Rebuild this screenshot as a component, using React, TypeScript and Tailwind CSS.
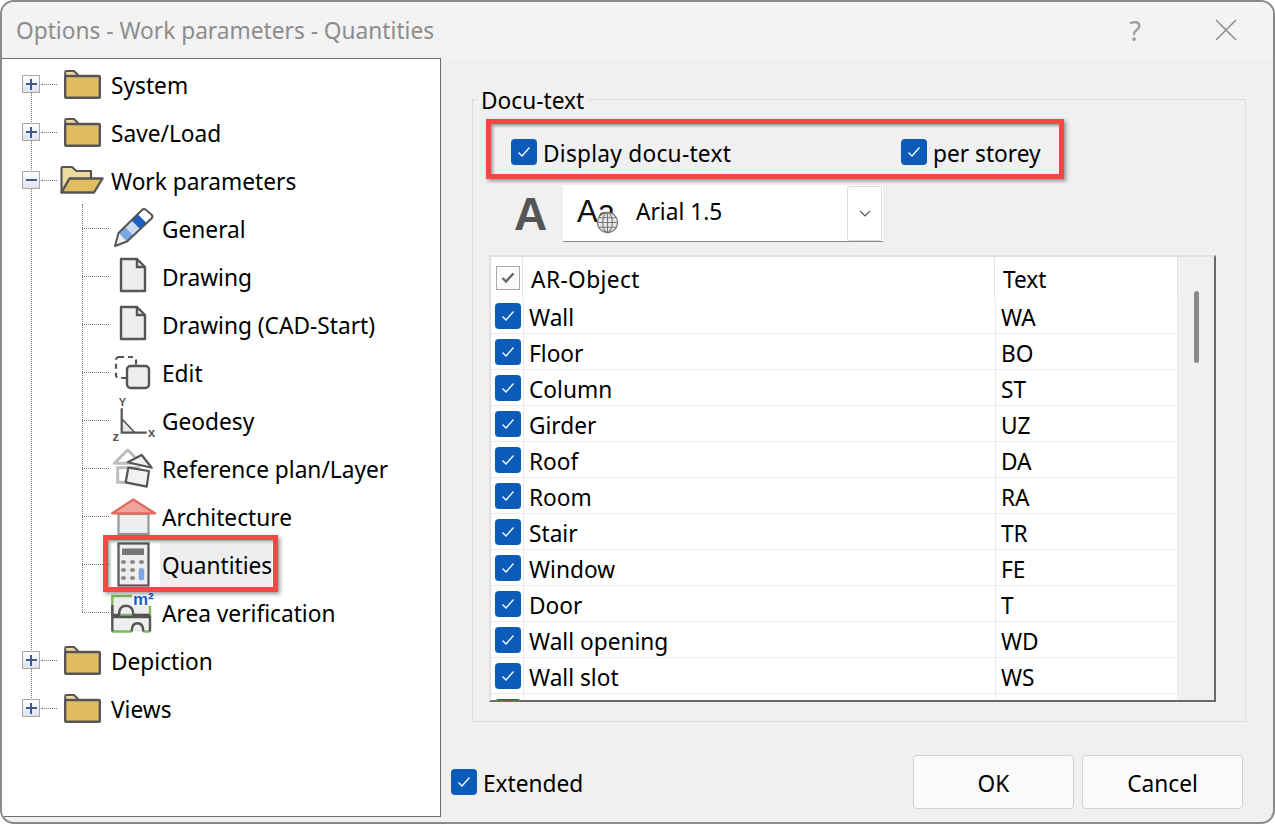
import React from "react";

const Check = () => (
  <span className="flex h-[26px] w-[26px] shrink-0 items-center justify-center rounded-[4px] bg-[#0a5cb8]">
    <svg width="14" height="12" viewBox="0 0 14 12" fill="none" stroke="#fff" strokeWidth="1.3">
      <path d="M1.5 6.5 L5 10 L12.5 1.5" />
    </svg>
  </span>
);

const Folder = () => (
  <svg width="48" height="48" viewBox="0 0 48 48" className="shrink-0">
    <path d="M7.2 15 V10 Q7.2 9 8.5 9 H16 L20 13 V15 Z" fill="#eedb9f" stroke="#555" strokeWidth="2" strokeLinejoin="round" />
    <rect x="7.2" y="14" width="34.6" height="21.8" rx="0.8" fill="#e0bd60" stroke="#555" strokeWidth="2.4" />
  </svg>
);

const OpenFolder = () => (
  <svg width="48" height="48" viewBox="0 0 48 48" className="shrink-0">
    <path d="M3.5 34 V10 Q3.5 9 5 9 H14 L18.5 13 H33 V21 H12 L3.5 34 Z" fill="#eedb9f" stroke="#555" strokeWidth="2.2" strokeLinejoin="round" />
    <path d="M3.5 34.5 L11.5 20.5 H44.5 L36 34.5 Z" fill="#e0bd60" stroke="#555" strokeWidth="2.4" strokeLinejoin="round" />
  </svg>
);

const Pencil = () => (
  <svg width="48" height="48" viewBox="0 0 48 48" className="shrink-0">
    <path d="M6 40 L9.5 27 L18 35.5 Z" fill="#eee" />
    <path d="M9.5 27 L16 20.75 L24.5 29.25 L18 35.5 Z" fill="#7ba7e0" />
    <path d="M16 20.75 L22.5 14.5 L31 23 L24.5 29.25 Z" fill="#c9daf2" />
    <path d="M22.5 14.5 L29 8.25 L37.5 16.75 L31 23 Z" fill="#1e5fc4" />
    <path d="M29 8.25 L35 3 L43.5 10.5 L37.5 16.75 Z" fill="#fff" />
    <path d="M6 40 L9.5 27 L33 4 Q35 2 37 4 L42.5 8.5 Q44.5 10.5 42.5 12.5 L18 35.5 Z" fill="none" stroke="#555" strokeWidth="2" strokeLinejoin="round" />
  </svg>
);

const Doc = () => (
  <svg width="48" height="48" viewBox="0 0 48 48" className="shrink-0">
    <path d="M12 5 H28 L36 13 V37 H12 Z" fill="#eee" stroke="#555" strokeWidth="2.4" strokeLinejoin="round" />
    <path d="M28 5 V13 H36" fill="none" stroke="#555" strokeWidth="2.4" />
  </svg>
);

const EditIcon = () => (
  <svg width="48" height="48" viewBox="0 0 48 48" className="shrink-0">
    <rect x="7" y="7" width="20" height="21" rx="3" fill="none" stroke="#555" strokeWidth="2.2" strokeDasharray="5 4" />
    <rect x="18" y="16" width="22" height="22" rx="3.5" fill="#eee" stroke="#555" strokeWidth="2.4" />
  </svg>
);

const Geodesy = () => (
  <svg width="48" height="48" viewBox="0 0 48 48" className="shrink-0 overflow-visible">
    <path d="M12.7 21 L26 34.7 H12.7 Z" fill="#e8e8e8" />
    <path d="M13 21 L26 34.7" fill="none" stroke="#555" strokeWidth="1.6" />
    <path d="M12.7 10.3 V34.7 H37.7" fill="none" stroke="#555" strokeWidth="2.2" />
    <text x="13.3" y="8.3" fontSize="11" fontWeight="700" textAnchor="middle" fill="#555" fontFamily="'Liberation Sans',sans-serif">Y</text>
    <text x="42.7" y="38.7" fontSize="13" fontWeight="700" textAnchor="middle" fill="#555" fontFamily="'Liberation Sans',sans-serif">x</text>
    <text x="6.7" y="43" fontSize="13" fontWeight="700" textAnchor="middle" fill="#555" fontFamily="'Liberation Sans',sans-serif">z</text>
  </svg>
);

const RefPlan = () => (
  <svg width="48" height="48" viewBox="0 0 48 48" className="shrink-0">
    <path d="M5.3 17.3 L18.7 4 L32 17.3 Z" fill="none" stroke="#bdbdbd" strokeWidth="3" strokeLinejoin="round" />
    <rect x="8.7" y="21.7" width="20.6" height="14.6" fill="none" stroke="#bdbdbd" strokeWidth="3" />
    <path d="M32.7 9 L18.7 16.3 L42.7 21.7 Z" fill="#f2f2f2" stroke="#555" strokeWidth="2.2" strokeLinejoin="round" />
    <path d="M19.3 21.7 L40 25 L37.7 40.7 L16.7 36.3 Z" fill="#f2f2f2" stroke="#555" strokeWidth="2.2" strokeLinejoin="round" />
  </svg>
);

const Arch = () => (
  <svg width="48" height="48" viewBox="0 0 48 48" className="shrink-0">
    <rect x="9.5" y="20" width="30" height="20" fill="#eee" stroke="#999" strokeWidth="2.2" />
    <path d="M3 19.3 L24.3 5.5 L46 19.3 Z" fill="#eea49b" stroke="#e2695e" strokeWidth="2.2" strokeLinejoin="round" />
  </svg>
);

const Calc = () => (
  <svg width="48" height="48" viewBox="0 0 48 48" className="shrink-0">
    <rect x="9.5" y="1.5" width="30" height="42" fill="#eee" stroke="#555" strokeWidth="2.2" />
    <rect x="13" y="6.5" width="22" height="6.5" fill="#777" />
    <g fill="#8a8a8a">
      <ellipse cx="14.5" cy="20" rx="2.6" ry="1.9" />
      <ellipse cx="23.5" cy="20" rx="2.6" ry="1.9" />
      <ellipse cx="32.5" cy="20" rx="2.6" ry="1.9" />
      <ellipse cx="14.5" cy="28" rx="2.6" ry="1.9" />
      <ellipse cx="23.5" cy="28" rx="2.6" ry="1.9" />
      <ellipse cx="14.5" cy="36" rx="2.6" ry="1.9" />
      <ellipse cx="23.5" cy="36" rx="2.6" ry="1.9" />
    </g>
    <rect x="29.7" y="26" width="5.5" height="12.5" rx="2.7" fill="#7ba7e0" />
  </svg>
);

const Area = () => (
  <svg width="48" height="48" viewBox="0 0 48 48" className="shrink-0 overflow-visible">
    <rect x="3.3" y="6" width="37.7" height="19" fill="#eee" stroke="#7dbb5d" strokeWidth="2.4" />
    <path d="M3.3 15 V25 H10 C10 18 13 15.7 17 15.7 C21.5 15.7 24.3 19 24.3 25 H41" fill="none" stroke="#555" strokeWidth="2.4" />
    <rect x="3.3" y="27" width="37.7" height="14.5" fill="#eee" />
    <path d="M3.3 41.5 H22.7 M34.3 41.5 H41" fill="none" stroke="#7dbb5d" strokeWidth="2.4" />
    <path d="M3.3 41.5 V27 H41 V41.5 M22.7 41.5 C22.7 36 25 33.3 28.5 33.3 C32 33.3 34.3 36 34.3 41.5" fill="none" stroke="#555" strokeWidth="2.4" />
    <rect x="23" y="1" width="23" height="15" fill="#fff" />
    <text x="24" y="15" fontSize="17" fontWeight="700" fill="#1e5fc4" fontFamily="'Liberation Sans',sans-serif">m²</text>
  </svg>
);

const Toggle = ({ open }: { open?: boolean }) => (
  <span className="relative z-10 flex h-[18px] w-[18px] shrink-0 items-center justify-center border border-[#a8a8a8] bg-gradient-to-b from-[#ffffff] to-[#dfe3ea]">
    <span className="absolute h-[2px] w-[11px] bg-[#3a5a9c]" />
    {!open && <span className="absolute h-[11px] w-[2px] bg-[#3a5a9c]" />}
  </span>
);

const Top = ({ label, open }: { label: string; open?: boolean }) => (
  <div className="flex h-[48px] items-center pl-[20px]">
    <span className="flex items-center pb-[4px]">
      <Toggle open={open} />
      <span className="ml-[1px] w-[16px] border-t border-dotted border-[#777]" />
    </span>
    <span className="ml-[1px]">{open ? <OpenFolder /> : <Folder />}</span>
    <span className="ml-[5px]">{label}</span>
  </div>
);

const Sub = ({ label, icon, sel }: { label: string; icon: React.ReactNode; sel?: boolean }) => (
  <div className="flex h-[48px] items-center pl-[80px]">
    <span className="mb-[4px] w-[27px] border-t border-dotted border-[#777]" />
    <span>{icon}</span>
    <span className={sel ? "ml-[3px] flex h-[46px] w-[112px] items-center bg-[#eeeeee] pl-[2px]" : "ml-[5px]"}>{label}</span>
  </div>
);

const rows: [string, string][] = [
  ["Wall", "WA"],
  ["Floor", "BO"],
  ["Column", "ST"],
  ["Girder", "UZ"],
  ["Roof", "DA"],
  ["Room", "RA"],
  ["Stair", "TR"],
  ["Window", "FE"],
  ["Door", "T"],
  ["Wall opening", "WD"],
  ["Wall slot", "WS"],
];

export default function App() {
  return (
    <div className="relative h-[824px] w-[1275px] overflow-hidden rounded-[14px] border-2 border-[#8a8a8a] bg-[#f0f0f0] font-['Noto_Sans',sans-serif] text-[22.7px] leading-none text-black">
      <div className="flex h-[56px] items-center bg-[#f3f3f3] pl-[14px] pr-[36px] text-[#8c8c8c]">
        <span className="flex-1 pt-[2px]">Options - Work parameters - Quantities</span>
        <span className="mr-[74px] text-[27px] text-[#9a9a9a]">?</span>
        <svg width="22" height="22" viewBox="0 0 22 22" stroke="#8c8c8c" strokeWidth="1.5">
          <path d="M1 1 L21 21 M21 1 L1 21" />
        </svg>
      </div>
      <div className="flex h-[766px]">
        <div className="relative h-[759px] w-[439px] shrink-0 border-b border-r border-t border-[#707070] bg-white pt-[3px]">
          <span className="absolute left-[29px] top-[25px] h-[624px] border-l border-dotted border-[#777]" />
          <span className="absolute left-[80px] top-[145px] h-[408px] border-l border-dotted border-[#777]" />
          <div className="relative">
            <Top label="System" />
            <Top label="Save/Load" />
            <Top label="Work parameters" open />
            <Sub label="General" icon={<Pencil />} />
            <Sub label="Drawing" icon={<Doc />} />
            <Sub label="Drawing (CAD-Start)" icon={<Doc />} />
            <Sub label="Edit" icon={<EditIcon />} />
            <Sub label="Geodesy" icon={<Geodesy />} />
            <Sub label="Reference plan/Layer" icon={<RefPlan />} />
            <Sub label="Architecture" icon={<Arch />} />
            <Sub label="Quantities" icon={<Calc />} sel />
            <Sub label="Area verification" icon={<Area />} />
            <Top label="Depiction" />
            <Top label="Views" />
          </div>
        </div>
        <div className="flex-1">
          <div className="relative ml-[31px] mt-[41px] h-[623px] w-[774px] border border-[#dcdcdc]">
            <span className="absolute left-[4px] top-[-10px] bg-[#f0f0f0] px-[4px] pb-[2px]">Docu-text</span>
            <div className="ml-[38px] flex h-[65px] items-center pt-[39px]">
              <Check />
              <span className="w-[364px] pl-[6px] pt-[4px] tracking-[0.25px]">Display docu-text</span>
              <Check />
              <span className="pl-[6px] pt-[4px]">per storey</span>
            </div>
            <div className="ml-[41px] mt-[20px] flex h-[57px] items-center">
              <span className="w-[49px] font-['Liberation_Sans',sans-serif] text-[46px] font-bold text-[#555]">A</span>
              <div className="relative flex h-[57px] w-[320px] items-center border-b border-[#8a8a8a] bg-white pl-[14px]">
                <span className="relative h-[50px] w-[59px] shrink-0">
                  <span className="absolute left-0 top-[8px] font-['Liberation_Sans',sans-serif] text-[31px] text-[#111]">Aa</span>
                  <svg className="absolute left-[19px] top-[23px]" width="23" height="23" viewBox="0 0 24 24" fill="#fff" stroke="#777" strokeWidth="1.2">
                    <circle cx="12" cy="12" r="10.5" fill="#e8e8e8" />
                    <ellipse cx="12" cy="12" rx="5" ry="10.5" fill="none" />
                    <path d="M12 1.5 V22.5 M1.5 12 H22.5 M3 7 H21 M3 17 H21" fill="none" />
                  </svg>
                </span>
                <span className="pb-[2px]">Arial 1.5</span>
                <span className="ml-auto mr-[1px] flex h-[55px] w-[35px] items-center justify-center rounded-[2px] border border-[#dcdcdc] bg-white">
                  <svg width="12" height="7" viewBox="0 0 12 7" fill="none" stroke="#555" strokeWidth="1.1">
                    <path d="M1 1 L6 6 L11 1" />
                  </svg>
                </span>
              </div>
            </div>
            <div className="ml-[16px] mt-[13px] flex h-[447px] w-[727px] border-b-2 border-l-2 border-r-2 border-t-2 border-b-[#6a6a6a] border-l-[#e0e0e0] border-r-[#6a6a6a] border-t-[#e0e0e0]">
              <div className="h-full w-[687px] shrink-0 overflow-hidden bg-white">
                <div className="flex h-[41px] items-center">
                  <span className="flex h-[41px] w-[32px] shrink-0 items-center border-r border-[#e4e4e4] pl-[5px]">
                    <span className="flex h-[24px] w-[24px] items-center justify-center border border-[#aaa] bg-[#fbfbfb]">
                      <svg width="14" height="12" viewBox="0 0 14 12" fill="none" stroke="#666" strokeWidth="2.4">
                        <path d="M1.5 6 L5 9.5 L12.5 1.5" />
                      </svg>
                    </span>
                  </span>
                  <span className="flex h-[41px] w-[472px] items-center border-r border-[#e4e4e4] pl-[8px] pt-[6px] tracking-[0.4px]">AR-Object</span>
                  <span className="flex h-[41px] flex-1 items-center border-r border-[#e4e4e4] pl-[8px] pt-[6px]">Text</span>
                </div>
                {rows.map(([a, b]) => (
                  <div key={a} className="flex h-[36px] items-start border-b border-[#ececec]">
                    <span className="flex h-[36px] w-[33px] shrink-0 items-center border-r border-[#ececec] pl-[4px]">
                      <Check />
                    </span>
                    <span className="h-[36px] w-[472px] border-r border-[#ececec] pl-[5px] leading-[40px]">{a}</span>
                    <span className="h-[36px] flex-1 border-r border-[#ececec] pl-[5px] leading-[40px]">{b}</span>
                  </div>
                ))}
                <div className="flex h-[36px]">
                  <span className="w-[33px] shrink-0 border-r border-[#ececec] pl-[4px] pt-[5px]">
                    <Check />
                  </span>
                  <span className="w-[472px] border-r border-[#ececec]" />
                  <span className="flex-1 border-r border-[#ececec]" />
                </div>
              </div>
              <div className="flex-1 pl-[16px] pt-[34px]">
                <div className="h-[72px] w-[5px] rounded-[3px] bg-[#8a8a8a]" />
              </div>
            </div>
          </div>
          <div className="ml-[10px] mt-[33px] flex h-[54px] items-center pr-[30px]">
            <Check />
            <span className="flex-1 pl-[6px] pt-[4px]">Extended</span>
            <button className="h-[54px] w-[161px] rounded-[4px] border border-[#d0d0d0] bg-[#fbfbfb] pt-[4px]">OK</button>
            <button className="ml-[8px] h-[54px] w-[161px] rounded-[4px] border border-[#d0d0d0] bg-[#fbfbfb] pt-[4px]">Cancel</button>
          </div>
        </div>
      </div>
      <div className="absolute left-[484px] top-[117px] h-[60px] w-[578px] border-[5px] border-[#fb4444] shadow-[2px_2px_4px_rgba(0,0,0,0.4),inset_2px_2px_3px_rgba(0,0,0,0.35)]" />
      <div className="absolute left-[101px] top-[533px] h-[57px] w-[175px] border-[5px] border-[#fb4444] shadow-[2px_2px_4px_rgba(0,0,0,0.4),inset_2px_2px_3px_rgba(0,0,0,0.35)]" />
    </div>
  );
}
